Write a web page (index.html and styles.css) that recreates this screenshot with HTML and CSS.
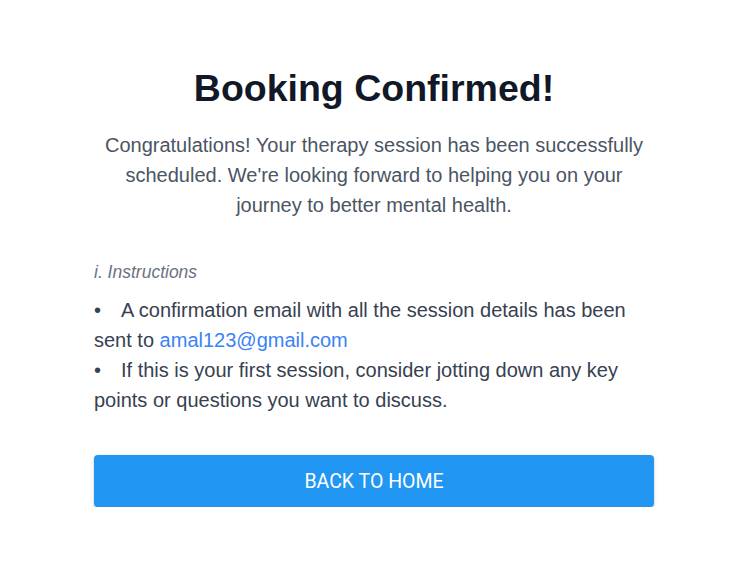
FILE: index.html
```html
<!DOCTYPE html>
<html>
<head>
<meta charset="utf-8">
<link rel="stylesheet" href="styles.css">
</head>
<body>
<main class="confirm">
  <h1 class="title">Booking Confirmed!</h1>
  <p class="lead">Congratulations! Your therapy session has been successfully scheduled. We're looking forward to helping you on your journey to better mental health.</p>
  <section class="instructions">
    <p class="label">i. Instructions</p>
    <ul class="list">
      <li>A confirmation email with all the session details has been sent to <span class="email">amal123@gmail.com</span></li>
      <li>If this is your first session, consider jotting down any key points or questions you want to discuss.</li>
    </ul>
  </section>
  <button class="btn" type="button">Back to Home</button>
</main>
</body>
</html>
```
FILE: styles.css
```css
html, body {
  margin: 0;
  padding: 0;
  background: #ffffff;
}
body {
  font-family: "Liberation Sans", Arial, sans-serif;
}
.confirm {
  width: 560px;
  margin-left: 94px;
  padding-top: 64px;
  display: flex;
  flex-direction: column;
}
.title {
  margin: 0;
  font-size: 37.5px;
  line-height: 48px;
  font-weight: 700;
  color: #111827;
  text-align: center;
}
.lead {
  margin: 18px 0 0;
  font-size: 20px;
  line-height: 30px;
  color: #4b5563;
  text-align: center;
}
.instructions {
  margin-top: 40px;
}
.label {
  margin: 0;
  font-size: 17.5px;
  line-height: 24px;
  font-style: italic;
  color: #6b7280;
}
.list {
  margin: 11px 0 0;
  padding: 0;
  list-style: none;
  font-size: 20px;
  line-height: 30px;
  color: #374151;
}
.list li::before {
  content: "\2022";
  display: inline-block;
  width: 27px;
}
.email {
  color: #3b82f6;
}
.btn {
  margin-top: 40px;
  height: 52px;
  border: none;
  border-radius: 4px;
  background: #2196f3;
  color: #ffffff;
  font-family: Roboto, sans-serif;
  font-size: 19.5px;
  font-weight: 400;
  text-transform: uppercase;
  letter-spacing: 0;
  box-shadow: 0 3px 1px -2px rgba(0,0,0,0.2), 0 2px 2px 0 rgba(0,0,0,0.14), 0 1px 5px 0 rgba(0,0,0,0.12);
  cursor: pointer;
}
```
